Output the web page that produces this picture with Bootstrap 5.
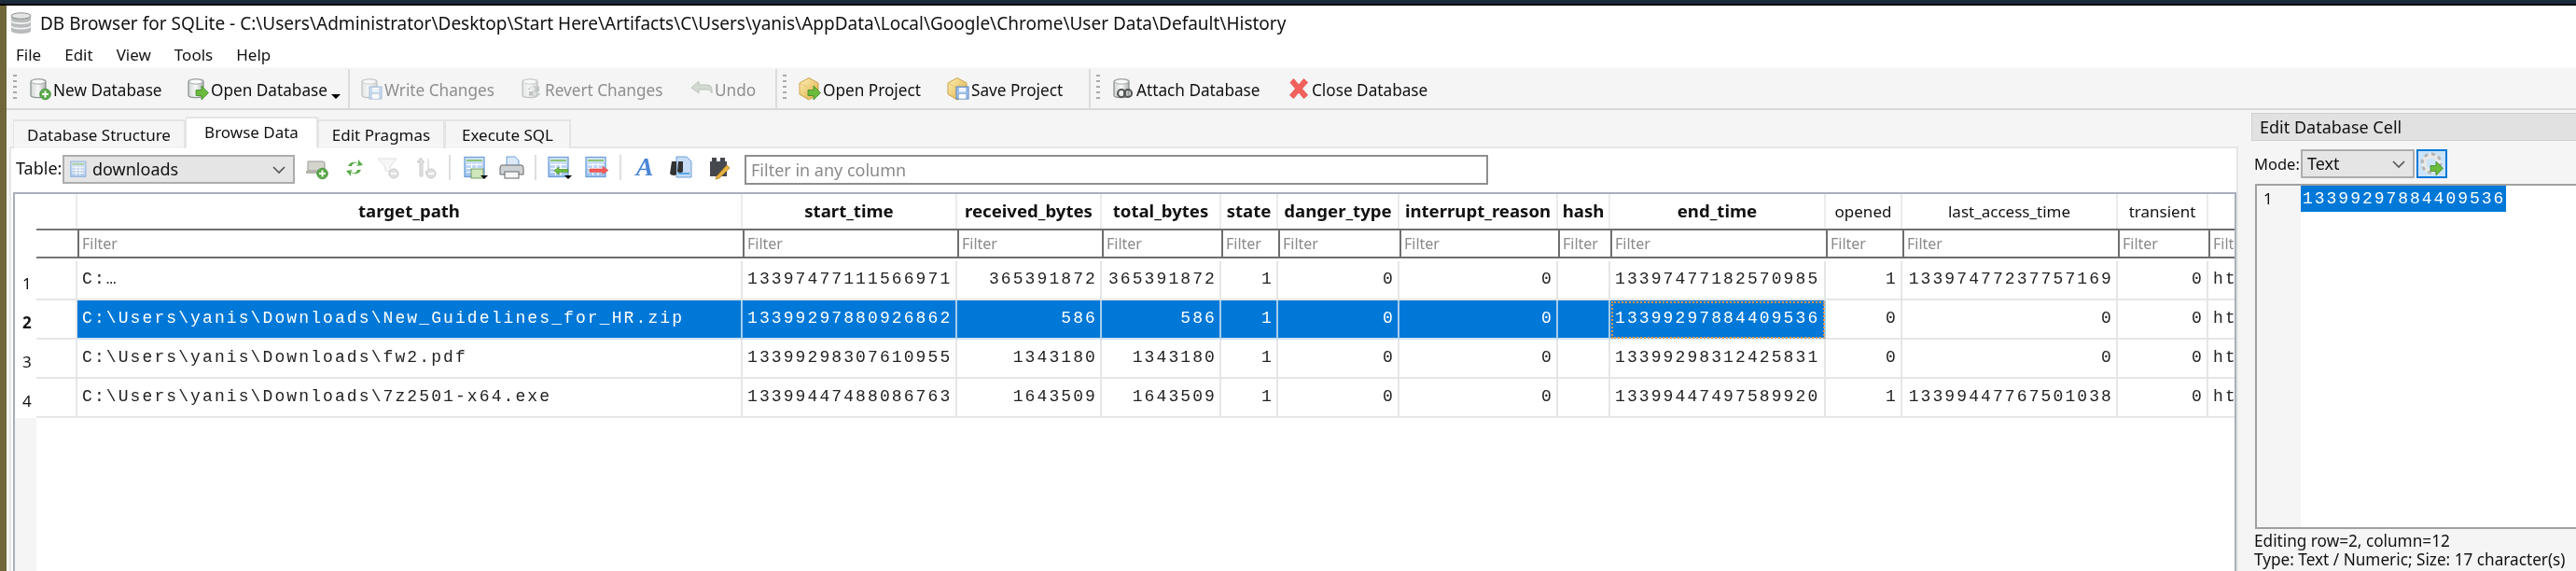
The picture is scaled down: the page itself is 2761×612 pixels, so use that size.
<!DOCTYPE html>
<html lang="en">
<head>
<meta charset="utf-8">
<title>DB Browser for SQLite</title>
<link rel="stylesheet" href="https://cdn.jsdelivr.net/npm/bootstrap@5.3.0/dist/css/bootstrap.min.css">
<style>
html,body{height:612px;overflow:hidden;background:#fff}
body{font-family:"Noto Sans",sans-serif;font-size:18px;color:#111;line-height:1.2}
.edge-navy{height:4px;background:#1c2b3c}
.edge-black{height:2px;background:#000}
.desk{height:606px;filter:blur(.45px)}
.olive{width:7px;background:#6f6738;flex:none}
.win{background:#f5f5f5;min-width:0}
.ttl{height:38px;background:#fff;padding-left:3px;gap:8px;white-space:nowrap;font-size:19px}
.menus{height:28px;background:#fff;padding-left:10px;gap:25px;padding-top:2px;font-size:17px}
.tools{height:46px;border-top:1px solid #fafafa;border-bottom:2px solid #d9d9d9;background:#f5f5f5;padding-left:7px;font-size:17.2px}
.hdl{width:4px;height:30px;margin-right:12px;background:repeating-linear-gradient(#aaa 0 2px,transparent 2px 6px);flex:none}
.vsep{width:2px;height:42px;background:#dcdcdc;flex:none;margin-right:6px}
.tbtn{display:flex;align-items:center;gap:1px;white-space:nowrap;flex:none;color:#111}
.tbtn svg,.ic svg{flex:none;display:block}
.tlabel{padding-top:5px}
.off{color:#8e8e8e}
.w1{width:169px}.w2{width:156px}.w3{width:172px}.w4{width:182px}.w5{width:92px}.w6{width:159px}.w7{width:153px}.w8{width:188px}.w9{width:150px}
.ddn{width:0;height:0;border:5px solid transparent;border-top:5px solid #000;border-bottom:0;margin:18px 8px 0 0;flex:none}
.mainrow{height:494px}
.lpane{width:2406px;flex:none;padding-top:7px}
.tabsx{margin-left:4px;height:34px;border:0;flex-wrap:nowrap;position:relative;z-index:1;align-items:flex-end;margin-bottom:-2px;padding-left:3px}
.tabx{display:block;height:31px;line-height:29px;text-align:center;background:#f5f5f5;border:2px solid #e4e4e4;border-bottom:0;color:#111;font-size:17px;border-left-width:1px}
.tabx.on{height:34px;line-height:30px;background:#fff;border-bottom:2px solid #fff}
.t1{width:185px}.t2{width:142px}.t3{width:136px}.t4{width:135px}
.pane{margin-left:3px;width:2389px;height:455px;border:2px solid #e6e6e6;border-bottom:0;background:#fff;overflow:hidden}
.bbar{height:47px;padding:7px 0 0 5px}
.lbl{width:50px;flex:none}
.combo{height:31px;background:#e5e5e5;border:2px solid #adadad;color:#111;display:flex;align-items:center;flex:none;padding-left:6px;gap:4px}
.combo .chev{margin-left:auto;margin-right:7px;flex:none}
.c-table{width:249px}
.ic{flex:none;display:flex;align-items:center}
.m327{margin-left:11px}.m367{margin-left:17px}.m407{margin-left:14px}.m450{margin-left:14px}
.bsep{width:2px;height:27px;background:#dedede;flex:none}
.ms11{margin-left:11px}.ms13{margin-left:13px}.ms15{margin-left:15px}.ms16{margin-left:16px}
.anyf.form-control{width:797px;height:32px;flex:none;border:2px solid #8e8e8e;border-radius:0;margin-left:14px;padding:0 5px;font-size:18px;color:#111;box-shadow:none;background:#fff;line-height:1}
.anyf::placeholder,.ff::placeholder{color:#8a8a8a;opacity:1}
.gridbox{margin-left:2px;height:408px;border:2px solid #a9afbb;border-bottom:0;background:linear-gradient(90deg,#f5f5f5 23px,#fff 23px);overflow:hidden}
.table.gridt{width:2551px;table-layout:fixed;border-collapse:separate;border-spacing:0;margin:0;--bs-table-bg:#fff}
.table.gridt>:not(caption)>*>*{padding:0;border:0;box-shadow:none;vertical-align:middle;background-color:#fff;color:#111;white-space:nowrap;overflow:hidden}
.table.gridt>thead>.hrow>th{height:37px;text-align:center;font-weight:700;font-size:18.6px;border-right:2px solid #ececec;line-height:1}
.table.gridt>thead>.hrow>th.reg{font-weight:400;font-size:17px}
.table.gridt>thead>.hrow>th:first-child{border-right:0}
.table.gridt>thead>.frow>td{height:35px;vertical-align:top}
.plug{height:32px;border-top:2px solid #777;border-bottom:2px solid #777}
.ff.form-control{display:block;width:100%;height:32px;border:2px solid #6e6e6e;border-right:0;border-radius:0;padding:0 1px 0 3px;font-size:16px;line-height:1;box-shadow:none;background:#fff;min-height:0}
.table.gridt>tbody>tr>td{height:42px;font-family:"Liberation Mono",monospace;font-size:18px;letter-spacing:2.1px;padding:0 3px 0 5px;border-right:2px solid #e6e6e6;border-bottom:2px solid #e6e6e6;color:#222}
.table.gridt>tbody>tr>td.num{text-align:right}
.table.gridt>tbody>tr>th{height:42px;font-family:"Noto Sans",sans-serif;font-size:17px;font-weight:400;padding:6px 0 0 8px;letter-spacing:0}
.table.gridt>tbody>tr>th.bd{font-weight:700}
.table.gridt>tbody>tr.sel>td.bl{background-color:#0078d7;color:#fff;border-right-color:#a5cdee;border-bottom-color:#cfe3f4}
.table.gridt>tbody>tr.sel>td.cur{outline:2px dotted #e39a4a;outline-offset:-3px}
.k1{width:23px}.k2{width:44px}.k3{width:713px}.k4{width:230px}.k5{width:155px}.k6{width:128px}.k7{width:61px}.k8{width:130px}.k9{width:170px}.k10{width:56px}.k11{width:231px}.k12{width:82px}.k13{width:231px}.k14{width:97px}.k15{width:200px}
.ictx{font-family:"Liberation Serif",serif;font-size:28px;line-height:26px;color:#4a86d8;width:20px;justify-content:center}
.dock{width:348px;flex:none;padding-top:3px;height:494px}
.dtitle{height:30px;background:#e1e1e1;border:1px solid #d0d0d0;padding-left:8px;line-height:28px;margin-bottom:9px;border-right:0}
.moderow{height:31px;padding-left:3px;margin-bottom:6px}
.mlbl{width:50px;flex:none;font-size:16.5px}
.c-mode{width:122px;padding-left:5px}
.gearb{width:33px;height:31px;margin-left:2px;background:#cce4f7;border:2px solid #0078d7;border-radius:0;padding:0;display:flex;align-items:center;justify-content:center;flex:none}
.edbox{margin-left:4px;height:370px;border:2px solid #a0a0a0;border-right:0;background:linear-gradient(90deg,#f5f5f5 47px,#fff 47px);font-family:"Liberation Mono",monospace;font-size:18px;letter-spacing:2px;padding-left:6px;flex:none}
.lno{width:41px;flex:none;line-height:28px;letter-spacing:0;font-family:"Noto Sans",sans-serif;font-size:17px;padding-left:1px}
.picked{background:#0078d7;color:#fff;height:28px;line-height:28px;padding:0 1px 0 2px;white-space:nowrap;flex:none;letter-spacing:1.98px}
.stat{padding:3px 0 0 3px;line-height:20px;white-space:nowrap;font-size:17.2px}
</style>
</head>
<body>
<svg width="0" height="0" class="d-block">
<defs>
<linearGradient id="gs" x1="0" x2="1" y1="0" y2="0"><stop offset="0" stop-color="#d5d8d8"/><stop offset=".5" stop-color="#f7f8f8"/><stop offset="1" stop-color="#aeb2b2"/></linearGradient>
<linearGradient id="gy" x1="0" x2="1" y1="0" y2="1"><stop offset="0" stop-color="#fff2b8"/><stop offset="1" stop-color="#dca93c"/></linearGradient>
<linearGradient id="gb" x1="0" x2="0" y1="0" y2="1"><stop offset="0" stop-color="#dbe9fa"/><stop offset="1" stop-color="#9cc1ee"/></linearGradient>
<symbol id="cyl" viewBox="0 0 26 26"><path d="M3 5.500C3 2 19 2 19 5.500V20C19 23.500 3 23.500 3 20Z" fill="url(#gs)" stroke="#8d9292" stroke-width="1.300"/><ellipse cx="11" cy="5.500" rx="7.300" ry="2.600" fill="#fbfbfb" stroke="#a6aaaa"/></symbol>
<symbol id="plus" viewBox="0 0 26 26"><circle cx="18.500" cy="19" r="5.800" fill="#59a948" stroke="#3f8a36" stroke-width=".8"/><path d="M18.500 15.500v7M15 19h7" stroke="#fff" stroke-width="2"/></symbol>
<symbol id="garrow" viewBox="0 0 26 26"><path d="M11 14.500h6V10l7.500 7.500L17 25v-4.500h-6z" fill="#6cbb3c" stroke="#3f8a2a" stroke-width=".8"/></symbol>
<symbol id="floppy" viewBox="0 0 26 26"><rect x="11" y="11" width="13" height="13" fill="#9cc1ee" stroke="#5b86bb"/><rect x="14" y="12" width="7" height="4.500" fill="#eef5fd"/><rect x="13.500" y="18.500" width="8" height="5.500" fill="#fff" stroke="#7e9dc4" stroke-width=".6"/></symbol>
<symbol id="cube" viewBox="0 0 26 26"><path d="M12 1.500 22 7v12l-10 6-10-6V7z" fill="url(#gy)" stroke="#c9a14a"/><path d="M2 7l10 5.500L22 7M12 12.500V25" fill="none" stroke="#e6c777"/></symbol>
<symbol id="tbl" viewBox="0 0 26 26"><rect x="1" y="1.500" width="21" height="21" fill="url(#gb)" stroke="#6f9fd8" stroke-width="1.300"/><rect x="3" y="4" width="17" height="2" fill="#8fc676"/><path d="M3 9.500h17M3 13.500h17M3 17.500h17M8.500 8v13M14 8v13" stroke="#fff" stroke-width="1.200"/></symbol>
<symbol id="chev" viewBox="0 0 16 10"><path d="M2 2l6 6 6-6" fill="none" stroke="#555" stroke-width="1.600"/></symbol>
</defs>
</svg>
<div class="edge-navy"></div>
<div class="edge-black"></div>
<div class="desk d-flex">
<div class="olive"></div>
<div class="win flex-grow-1 d-flex flex-column">
  <div class="ttl d-flex align-items-center">
    <svg width="25" height="26" viewBox="0 0 25 26"><path d="M2 5C2 1 23 1 23 5V21C23 25 2 25 2 21Z" fill="#b9bcbc"/><ellipse cx="12.500" cy="5" rx="10.500" ry="3.200" fill="#e4e6e6" stroke="#8d9090"/><path d="M2 10.500C4 14 21 14 23 10.500M2 16C4 19.500 21 19.500 23 16" fill="none" stroke="#f3f3f3" stroke-width="1.600"/></svg>
    <span>DB Browser for SQLite - C:\Users\Administrator\Desktop\Start Here\Artifacts\C\Users\yanis\AppData\Local\Google\Chrome\User Data\Default\History</span>
  </div>
  <div class="menus d-flex align-items-center"><span>File</span><span>Edit</span><span>View</span><span>Tools</span><span>Help</span></div>
  <div class="tools d-flex align-items-center">
    <span class="hdl"></span>
    <span class="tbtn w1"><svg width="26" height="26"><use href="#cyl"/><use href="#plus"/></svg><span class="tlabel">New Database</span></span>
    <span class="tbtn w2"><svg width="26" height="26"><use href="#cyl"/><use href="#garrow"/></svg><span class="tlabel">Open Database</span></span>
    <span class="ddn"></span>
    <span class="vsep"></span>
    <span class="tbtn w3 off ms-1"><svg width="26" height="26" opacity=".5"><use href="#cyl"/><use href="#floppy"/></svg><span class="tlabel">Write Changes</span></span>
    <span class="tbtn w4 off"><svg width="26" height="26" opacity=".5"><use href="#cyl"/><path d="M9 14a6 5 0 0 1 10-2l2-2v6h-6l2-2a3 3 0 0 0-6 0zM22 18a6 5 0 0 1-10 2l-2 2v-6h6l-2 2a3 3 0 0 0 6 0z" fill="#8f9494"/></svg><span class="tlabel">Revert Changes</span></span>
    <span class="tbtn w5 off"><svg width="26" height="26" opacity=".55"><path d="M2 12l8-7v4h9c3 0 5 2 5 5v4c-1-3-3-4-5-4h-9v4z" fill="#b6c4b2" stroke="#8f9a8c"/></svg><span class="tlabel">Undo</span></span>
    <span class="vsep"></span>
    <span class="hdl"></span>
    <span class="tbtn w6"><svg width="26" height="26"><use href="#cube"/><use href="#garrow"/></svg><span class="tlabel">Open Project</span></span>
    <span class="tbtn w7"><svg width="26" height="26"><use href="#cube"/><use href="#floppy"/></svg><span class="tlabel">Save Project</span></span>
    <span class="vsep"></span>
    <span class="hdl"></span>
    <span class="tbtn w8"><svg width="26" height="26"><use href="#cyl"/><circle cx="11" cy="18" r="4" fill="none" stroke="#555" stroke-width="2.200"/><circle cx="18" cy="18" r="4" fill="none" stroke="#555" stroke-width="2.200"/></svg><span class="tlabel">Attach Database</span></span>
    <span class="tbtn w9"><svg width="26" height="26"><path d="M4 6.500 7.500 2.500 13 9l5.500-6.500L22.500 6.500 16.500 13l6 7-4 3.500L13 17l-5.500 6.500-4-3.500 6-7z" fill="#f2615c" stroke="#e04b47" stroke-width=".8"/></svg><span class="tlabel">Close Database</span></span>
  </div>
  <div class="mainrow d-flex">
    <div class="lpane">
      <ul class="nav tabsx">
        <li class="nav-item"><a class="tabx t1 text-decoration-none" href="#">Database Structure</a></li>
        <li class="nav-item"><a class="tabx t2 on text-decoration-none" href="#">Browse Data</a></li>
        <li class="nav-item"><a class="tabx t3 text-decoration-none" href="#">Edit Pragmas</a></li>
        <li class="nav-item"><a class="tabx t4 text-decoration-none" href="#">Execute SQL</a></li>
      </ul>
      <div class="pane">
        <div class="bbar d-flex align-items-start">
          <span class="lbl d-flex align-items-center h-75">Table:</span>
          <div class="combo c-table">
            <svg width="20" height="20" viewBox="0 0 26 26" opacity=".75"><use href="#tbl"/></svg>
            <span>downloads</span>
            <svg class="chev" width="16" height="10"><use href="#chev"/></svg>
          </div>
          <span class="ic m327"><svg width="26" height="28" viewBox="0 0 26 26"><path d="M3 6h16q2 0 2 2v8H3z" fill="#d4d4cc" stroke="#999"/><rect x="1" y="16" width="22" height="3" fill="#b5b5ad"/><use href="#plus"/></svg></span>
          <span class="ic m367"><svg width="20" height="28" viewBox="0 0 20 26"><path d="M3 11a7 6 0 0 1 11-3V4l5 6-7 1 2-2a4 4 0 0 0-7 2zM17 15a7 6 0 0 1-11 3v4l-5-6 7-1-2 2a4 4 0 0 0 7-2z" fill="#57ab48"/></svg></span>
          <span class="ic m407"><svg width="26" height="28" viewBox="0 0 26 26" opacity=".55"><path d="M1 3h20l-7 9v5l-5-1v-4z" fill="#f1f1f1" stroke="#c6c6c6"/><circle cx="18" cy="19" r="5" fill="#c9c9c9" stroke="#999"/><path d="M15 19h6" stroke="#fff" stroke-width="1.800"/></svg></span>
          <span class="ic m450"><svg width="26" height="28" viewBox="0 0 26 26" opacity=".55"><path d="M6 22V7H3l4-5 4 5H9v15zM15 3v14h-3l4 5" fill="#c5c5c5" stroke="#a5a5a5"/><circle cx="18" cy="19" r="5" fill="#c9c9c9" stroke="#999"/><path d="M15 19h6" stroke="#fff" stroke-width="1.800"/></svg></span>
          <span class="bsep ms11"></span>
          <span class="ic ms13"><svg width="28" height="28" viewBox="0 0 28 26"><use href="#tbl"/><rect x="9" y="14" width="13" height="10" fill="#cfe7bb" stroke="#5b8a4a" stroke-width=".8"/><path d="M19 21h8l-4 4z" fill="#000"/></svg></span>
          <span class="ic ms11"><svg width="27" height="28" viewBox="0 0 27 26"><path d="M8 1h9l4 4v7H8z" fill="#dbe9fa" stroke="#6f9fd8"/><path d="M3 10h21q2 0 2 3v7H1v-7q0-3 2-3z" fill="#cfd2d4" stroke="#666"/><rect x="6" y="17" width="15" height="7" fill="#f7f7f7" stroke="#666"/></svg></span>
          <span class="bsep ms11"></span>
          <span class="ic ms11"><svg width="28" height="28" viewBox="0 0 28 26"><use href="#tbl"/><path d="M8 16l5-4v2.500h10v3H13V20z" fill="#6cbb3c" stroke="#3f8a2a" stroke-width=".6"/><path d="M19 21h8l-4 4z" fill="#000"/></svg></span>
          <span class="ic ms13"><svg width="26" height="28" viewBox="0 0 26 26"><use href="#tbl"/><path d="M5 14h14v-2.500l6 4-6 4V17.500H5z" fill="#f35a5a" stroke="#d84a4a" stroke-width=".6"/></svg></span>
          <span class="bsep ms11"></span>
          <span class="ic ms15 fst-italic fw-bold ictx">A</span>
          <span class="ic ms16"><svg width="26" height="28" viewBox="0 0 26 26"><path d="M8 1h11l5 5v17H8z" fill="#c8dcf6" stroke="#6f9fd8"/><rect x="10" y="18" width="12" height="2" fill="#58a6e0"/><path d="M3 6h5v13q0 2-3 2t-4-2zM10 6h5v10q0 2-3 2t-3-2z" fill="#333"/></svg></span>
          <span class="ic ms15"><svg width="26" height="28" viewBox="0 0 26 26"><rect x="3" y="6" width="18" height="16" fill="#45484f"/><rect x="5" y="2" width="5" height="5" fill="#45484f"/><rect x="14" y="2" width="5" height="5" fill="#45484f"/><path d="M10 22l11-12 3 3-11 11-4 1z" fill="#e8b23f" stroke="#a97c1a" stroke-width=".7"/></svg></span>
          <input class="form-control anyf" placeholder="Filter in any column" aria-label="Filter in any column">
        </div>
        <div class="gridbox">
          <table class="table gridt">
            <colgroup>
              <col class="k1"><col class="k2"><col class="k3"><col class="k4"><col class="k5"><col class="k6"><col class="k7"><col class="k8"><col class="k9"><col class="k10"><col class="k11"><col class="k12"><col class="k13"><col class="k14"><col class="k15">
            </colgroup>
            <thead>
              <tr class="hrow"><th></th><th></th><th>target_path</th><th>start_time</th><th>received_bytes</th><th>total_bytes</th><th>state</th><th>danger_type</th><th>interrupt_reason</th><th>hash</th><th>end_time</th><th class="reg">opened</th><th class="reg">last_access_time</th><th class="reg">transient</th><th class="reg"></th></tr>
              <tr class="frow"><td></td><td><div class="plug"></div></td>
                <td><input class="form-control ff" placeholder="Filter"></td><td><input class="form-control ff" placeholder="Filter"></td><td><input class="form-control ff" placeholder="Filter"></td><td><input class="form-control ff" placeholder="Filter"></td><td><input class="form-control ff" placeholder="Filter"></td><td><input class="form-control ff" placeholder="Filter"></td><td><input class="form-control ff" placeholder="Filter"></td><td><input class="form-control ff" placeholder="Filter"></td><td><input class="form-control ff" placeholder="Filter"></td><td><input class="form-control ff" placeholder="Filter"></td><td><input class="form-control ff" placeholder="Filter"></td><td><input class="form-control ff" placeholder="Filter"></td><td><input class="form-control ff" placeholder="Filter"></td></tr>
            </thead>
            <tbody>
              <tr><th>1</th><td></td><td>C:…</td><td>13397477111566971</td><td class="num">365391872</td><td class="num">365391872</td><td class="num">1</td><td class="num">0</td><td class="num">0</td><td></td><td>13397477182570985</td><td class="num">1</td><td class="num">13397477237757169</td><td class="num">0</td><td>ht</td></tr>
              <tr class="sel"><th class="bd">2</th><td></td><td class="bl">C:\Users\yanis\Downloads\New_Guidelines_for_HR.zip</td><td class="bl">13399297880926862</td><td class="bl num">586</td><td class="bl num">586</td><td class="bl num">1</td><td class="bl num">0</td><td class="bl num">0</td><td class="bl"></td><td class="bl cur">13399297884409536</td><td class="num">0</td><td class="num">0</td><td class="num">0</td><td>ht</td></tr>
              <tr><th>3</th><td></td><td>C:\Users\yanis\Downloads\fw2.pdf</td><td>13399298307610955</td><td class="num">1343180</td><td class="num">1343180</td><td class="num">1</td><td class="num">0</td><td class="num">0</td><td></td><td>13399298312425831</td><td class="num">0</td><td class="num">0</td><td class="num">0</td><td>ht</td></tr>
              <tr><th>4</th><td></td><td>C:\Users\yanis\Downloads\7z2501-x64.exe</td><td>13399447488086763</td><td class="num">1643509</td><td class="num">1643509</td><td class="num">1</td><td class="num">0</td><td class="num">0</td><td></td><td>13399447497589920</td><td class="num">1</td><td class="num">13399447767501038</td><td class="num">0</td><td>ht</td></tr>
            </tbody>
          </table>
        </div>
      </div>
    </div>
    <div class="dock d-flex flex-column">
      <div class="dtitle">Edit Database Cell</div>
      <div class="moderow d-flex align-items-center">
        <span class="mlbl">Mode:</span>
        <div class="combo c-mode"><span>Text</span><svg class="chev" width="16" height="10"><use href="#chev"/></svg></div>
        <button class="gearb" type="button" aria-label="Auto-format"><svg width="26" height="26" viewBox="0 0 26 26"><circle cx="12" cy="12" r="8" fill="none" stroke="#e9e9e9" stroke-width="5"/><circle cx="12" cy="12" r="10" fill="none" stroke="#b5b5b5" stroke-width="3" stroke-dasharray="4 3.800"/><use href="#garrow"/></svg></button>
      </div>
      <div class="edbox d-flex align-items-start"><span class="lno">1</span><span class="picked">13399297884409536</span></div>
      <div class="stat">Editing row=2, column=12<br>Type: Text / Numeric; Size: 17 character(s)</div>
    </div>
  </div>
</div>
</div>
</body>
</html>
